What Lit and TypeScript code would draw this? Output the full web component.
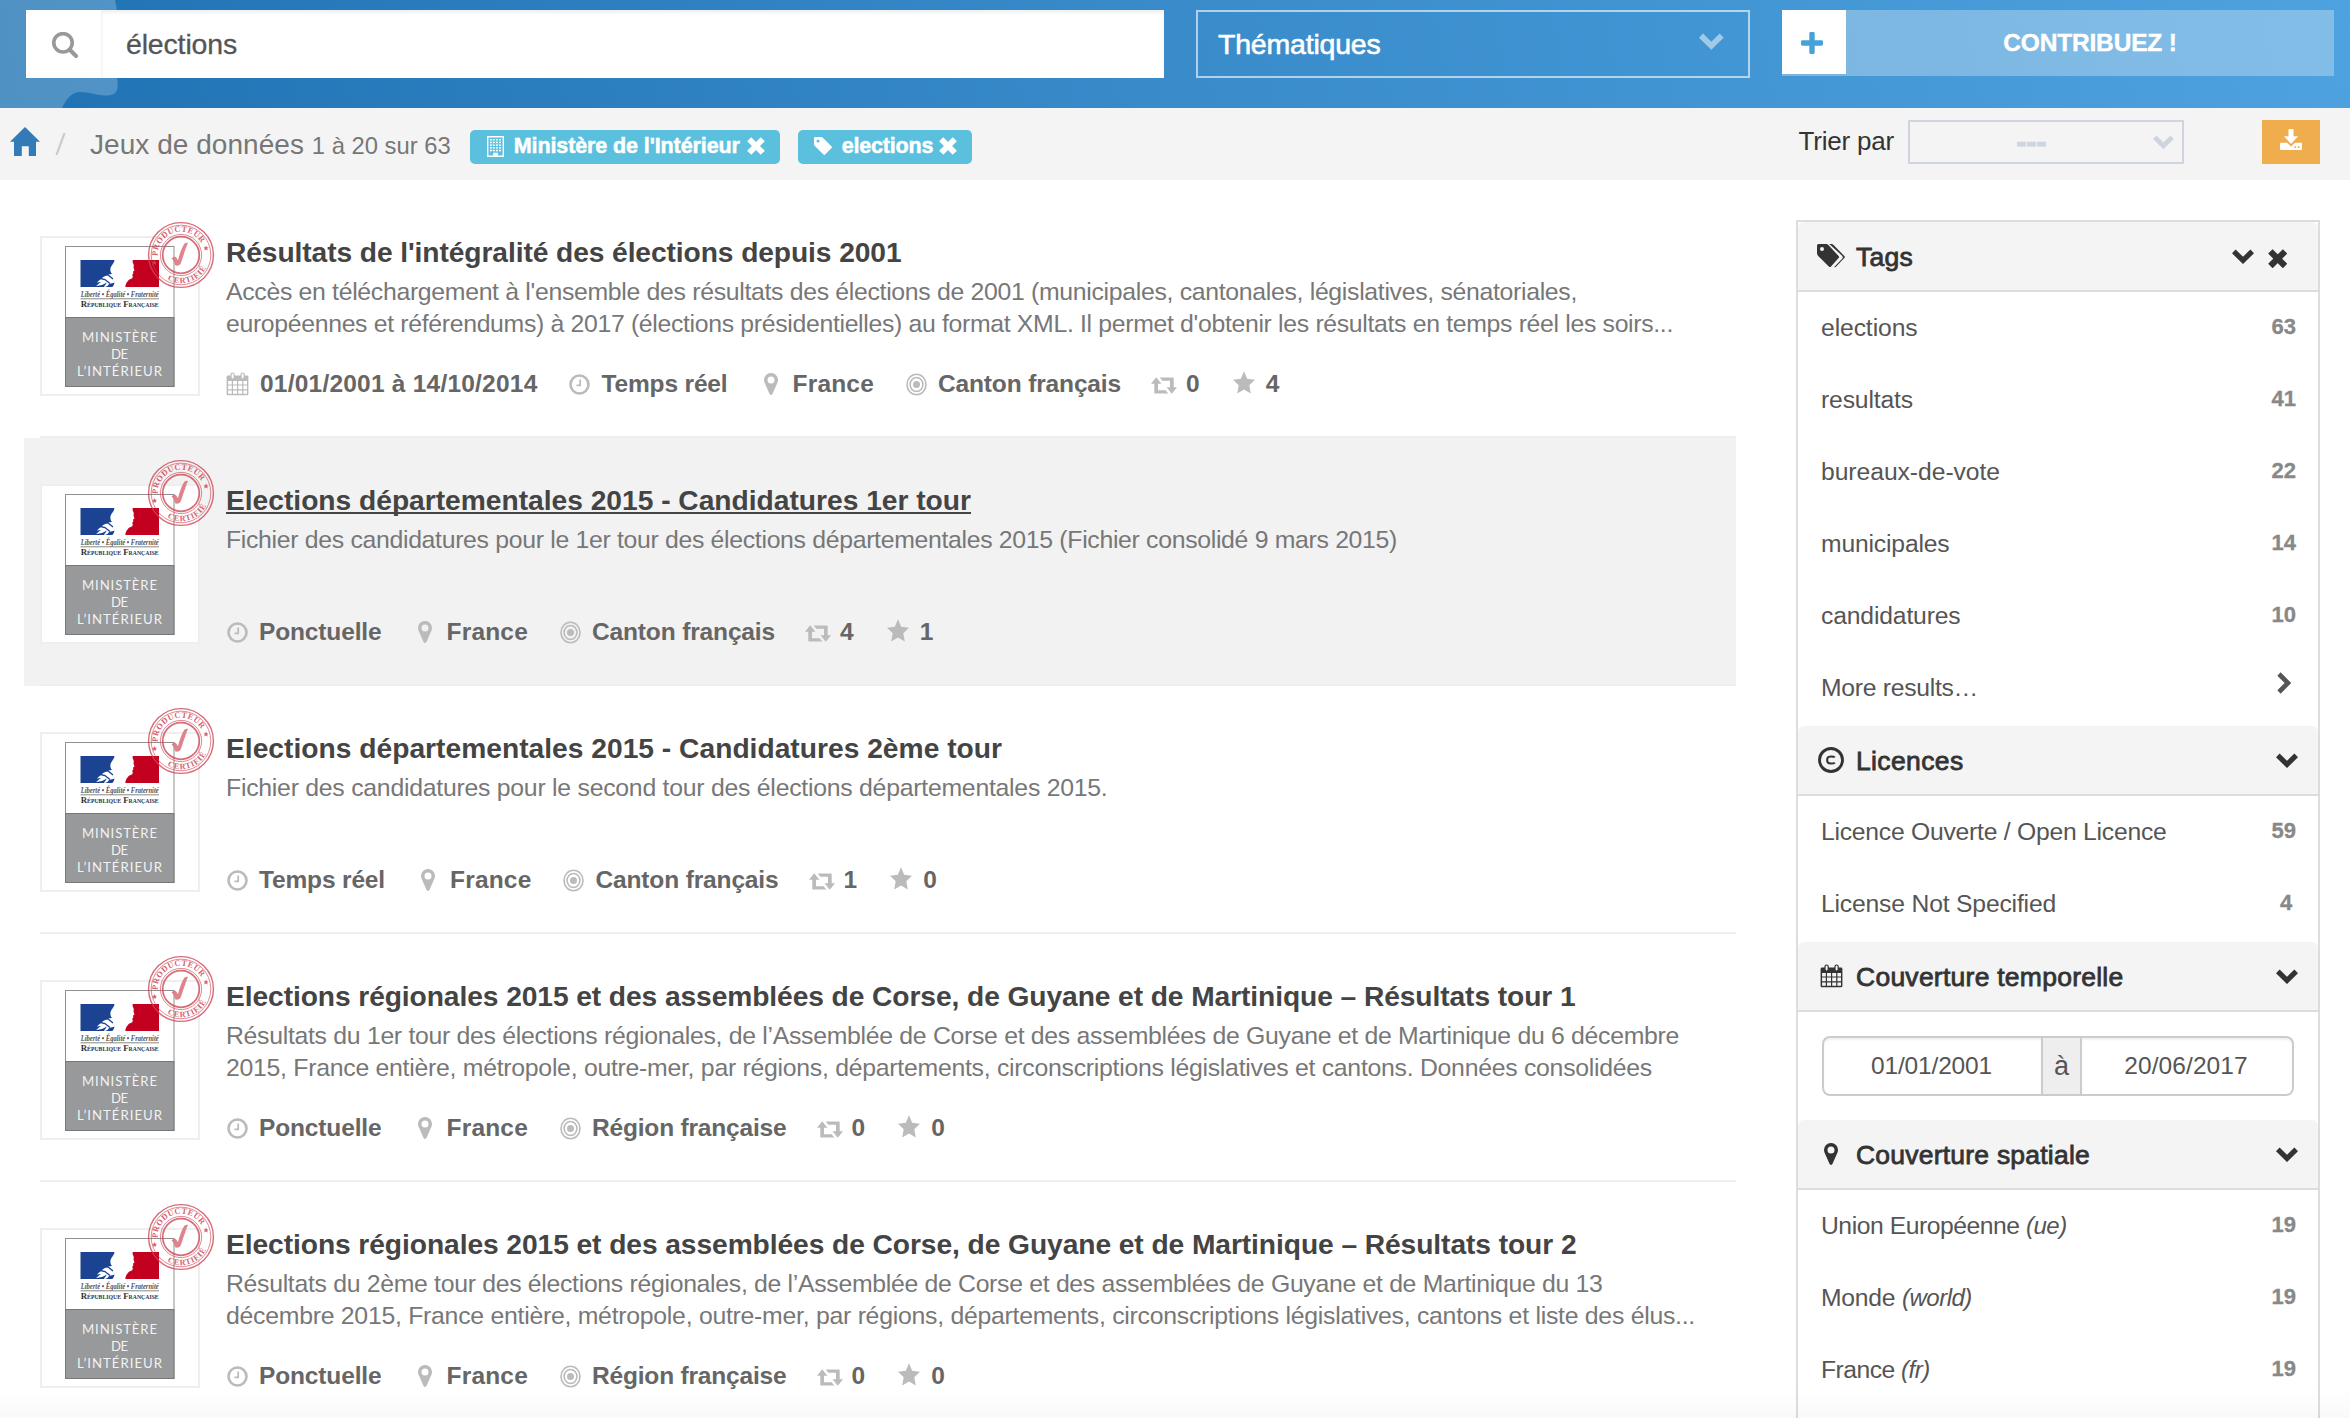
import { LitElement, html, css, svg, nothing } from "lit";
import { customElement, property } from "lit/decorators.js";
import { classMap } from "lit/directives/class-map.js";

/** A single line of text, tracked so that it fills the given width. */
@customElement("text-run")
class TextRun extends LitElement {
  @property() text = "";
  @property({ type: Number }) w = 0;

  render() {
    return html`${this.text}`;
  }

  updated() {
    if (!this.w) return;
    this.style.letterSpacing = "0px";
    const natural = this.getBoundingClientRect().width;
    this.style.letterSpacing = `${(this.w - natural) / this.text.length}px`;
  }
}

const run = (text: string, w = 0) => html`<text-run .text=${text} .w=${w}></text-run>`;

const calendar = svg`
  <path d="M2 3.5h19a1.4 1.4 0 0 1 1.4 1.4v17a1.4 1.4 0 0 1-1.4 1.4H2A1.4 1.4 0 0 1 .6 21.900V4.900A1.4 1.4 0 0 1 2 3.500zM2.100 9v3.400h3.700V9zm4.900 0v3.400h4V9zm5.200 0v3.400h4V9zm5.200 0v3.400h3.600V9zM2.100 13.600v3.600h3.700v-3.600zm4.900 0v3.600h4v-3.600zm5.200 0v3.600h4v-3.600zm5.200 0v3.600h3.600v-3.600zM2.100 18.400v3.400h3.700v-3.400zm4.900 0v3.400h4v-3.400zm5.200 0v3.400h4v-3.400zm5.200 0v3.400h3.600v-3.400z" fill="currentColor" fill-rule="evenodd"/>
  <rect x="5" y="1" width="3.200" height="6" rx="1.600" fill="var(--hole, #fff)" stroke="currentColor" stroke-width="1.200"/>
  <rect x="15" y="1" width="3.200" height="6" rx="1.600" fill="var(--hole, #fff)" stroke="currentColor" stroke-width="1.200"/>`;

const ICONS: Record<string, { w: number; h: number; body: unknown }> = {
  calendar: { w: 23, h: 24, body: calendar },
  clock: {
    w: 21, h: 21,
    body: svg`<circle cx="10.500" cy="10.500" r="9" fill="none" stroke="currentColor" stroke-width="2.600"/><path d="M11.200 5.600v5.800H7.500" fill="none" stroke="currentColor" stroke-width="1.700"/>`,
  },
  pin: {
    w: 14, h: 22,
    body: svg`<path fill="currentColor" fill-rule="evenodd" d="M7 0a6.900 6.900 0 0 1 7 7c0 1.300-.300 2.200-.700 3.100L8.400 20.900a1.550 1.550 0 0 1-2.800 0L.700 10.100A7.300 7.300 0 0 1 0 7a6.900 6.900 0 0 1 7-7zm0 3.500a3.500 3.500 0 1 0 0 7 3.500 3.500 0 0 0 0-7z"/>`,
  },
  target: {
    w: 21, h: 23,
    body: svg`<ellipse cx="10.500" cy="11.500" rx="9.500" ry="10.300" fill="none" stroke="currentColor" stroke-width="1.600"/><ellipse cx="10.500" cy="11.500" rx="6.400" ry="7" fill="none" stroke="currentColor" stroke-width="1.600"/><circle cx="10.500" cy="11.500" r="3.500" fill="currentColor"/>`,
  },
  retweet: {
    w: 26, h: 17,
    body: svg`<path fill="currentColor" d="M5.200.300 10.400 6.800H7v6.500h7.600l2.700 3.300H4.100a.800.800 0 0 1-.800-.800v-9H0zM20.800 16.700 15.600 10.200H19V3.700h-7.600L8.700.400h13.200a.8.8 0 0 1 .8.800v9H26z"/>`,
  },
  star: {
    w: 22, h: 23,
    body: svg`<path fill="currentColor" d="m11 .3 3.200 7.500 7.800.9-5.700 5.500 1.500 8.200L11 18.500l-6.800 3.900 1.500-8.200L0 8.700l7.800-.9z"/>`,
  },
  search: {
    w: 26, h: 26,
    body: svg`<circle cx="11" cy="10.800" r="9.200" fill="none" stroke="currentColor" stroke-width="3.600"/><path d="m18 18 6 6" stroke="currentColor" stroke-width="4" stroke-linecap="round"/>`,
  },
  home: {
    w: 30, h: 29,
    body: svg`<path fill="currentColor" d="M15 0 30 14.700h-4V29h-7.200v-9.700h-7V29H4V14.700H0z"/>`,
  },
  building: {
    w: 17, h: 21,
    body: svg`<path fill="currentColor" fill-rule="evenodd" d="M0 0h17v21H0zm1.400 1.400v18.200h4.800v-2.900h4.600v2.900h4.800V1.400z"/><g fill="currentColor">${[3, 5.700, 8.400, 11.100, 13.800].map((y) =>
      [2.900, 5.800, 8.900, 12].map((x) => svg`<rect x=${x} y=${y} width="2" height="1.500"/>`)
    )}</g>`,
  },
  close: {
    w: 18, h: 18,
    body: svg`<path d="m2.200 2.200 13.600 13.600M15.800 2.200 2.200 15.800" stroke="currentColor" stroke-width="5.800"/>`,
  },
  tag: {
    w: 18, h: 18,
    body: svg`<path fill="currentColor" fill-rule="evenodd" d="M0 1.200A1.200 1.200 0 0 1 1.200 0h5.900c.7 0 1.500.4 2 .9l8.500 8.500c.5.500.5 1.100 0 1.600l-6.500 6.500c-.5.500-1.100.5-1.600 0L.9 9.100A3 3 0 0 1 0 7.100zM4 2.400a1.500 1.500 0 1 0 0 3 1.500 1.500 0 0 0 0-3z"/>`,
  },
  tags: {
    w: 28, h: 24,
    body: svg`<path fill="currentColor" fill-rule="evenodd" d="M0 1.600A1.600 1.600 0 0 1 1.600 0h7.200c1 0 2.100.5 2.800 1.200l10 10.700c.7.700.7 1.500 0 2.200l-7.600 8.500c-.7.700-1.500.7-2.200 0L1.200 11.900A4 4 0 0 1 0 9.100zM5 3a2 2 0 1 0 0 4 2 2 0 0 0 0-4z"/><path d="M12.300 0h1.700c1 0 2.100.5 2.800 1.200l10.500 10.700c.7.700.7 1.500 0 2.200l-8.100 8.500c-.6.600-1.200.9-2 .5l8-8.400c.8-1 .8-2-.1-2.900z" fill="currentColor"/>`,
  },
  down: {
    w: 22, h: 15,
    body: svg`<path d="m1.800 2.400 9.200 9 9.200-9" fill="none" stroke="currentColor" stroke-width="5.200"/>`,
  },
  right: {
    w: 14, h: 22,
    body: svg`<path d="m2 2 9 9-9 9" fill="none" stroke="currentColor" stroke-width="4.600"/>`,
  },
  plus: {
    w: 22, h: 22,
    body: svg`<path fill="currentColor" d="M9.700 0h2.600a1.400 1.400 0 0 1 1.400 1.400v6.900h6.900A1.400 1.400 0 0 1 22 9.700v2.600a1.400 1.400 0 0 1-1.400 1.400h-6.900v6.900a1.400 1.400 0 0 1-1.400 1.400H9.700a1.400 1.400 0 0 1-1.400-1.400v-6.900H1.400A1.400 1.400 0 0 1 0 12.300V9.700a1.400 1.400 0 0 1 1.400-1.400h6.900V1.400A1.400 1.400 0 0 1 9.700 0z"/>`,
  },
  download: {
    w: 22, h: 21,
    body: svg`<path fill="currentColor" d="M8.500 0h5v7.300H18L11 15 4 7.300h4.500z"/><path fill="currentColor" fill-rule="evenodd" d="M1.200 13.700h5.900l3.900 3.900 3.900-3.900h5.900a1.200 1.200 0 0 1 1.200 1.200V20a1 1 0 0 1-1 1H1a1 1 0 0 1-1-1v-5.100a1.200 1.200 0 0 1 1.200-1.200zm13.300 3.500v1.700h1.600v-1.700zm3.300 0v1.700h1.600v-1.700z"/>`,
  },
  copyright: {
    w: 26, h: 26,
    body: svg`<circle cx="13" cy="13" r="11.500" fill="none" stroke="currentColor" stroke-width="2.900"/><path d="M16.800 10.400c-1-1.100-6-1.500-7.100.2-.6 1.400-.6 3.400 0 4.800 1.100 1.700 6.100 1.300 7.100.2" fill="none" stroke="currentColor" stroke-width="2.100"/>`,
  },
};

const icon = (name: string, scale = 1) => {
  const i = ICONS[name];
  return html`<svg width=${i.w * scale} height=${i.h * scale} viewBox="0 0 ${i.w} ${i.h}" aria-hidden="true">${i.body}</svg>`;
};

const ministryLogo = html`<svg class="logo" width="110" height="142" viewBox="0 0 110 142">
  <rect x="0.500" y="0.500" width="108.500" height="140" fill="#fff" stroke="#8f8f8f"/>
  <rect x="0.500" y="71.500" width="108.500" height="69" fill="#98999b" stroke="#77787a"/>
  <rect x="15.500" y="14" width="34" height="27" fill="#1c4391"/>
  <rect x="60" y="14" width="34" height="27" fill="#c3001f"/>
  <path fill="#fff" d="M50 13.500h18c-1 2 0 3.500.800 5.500l-.3 2.500 1 3-1.500 1 .3 2-1 1 .5 2.500c-.5 2-2.500 2-3.500 2.500-2 2-4 4-4 8H47c2-2 2-3.500 3-5l-6 1.500-1.500 2-4 1.500 3.500-5-5 2.500-6 1 5-4-4 .5c4-4 9-8.500 15-8.500-2.500-3-2-6.500.5-9.500 1-1.500 2-3 2.500-5z"/>
  <path fill="none" stroke="#1c4391" stroke-width="1.300" d="m33 32 7 1.500 5 4M37 28.500l6 .5 5 4"/>
  <text x="54.700" y="50.600" font-size="7.200" font-style="italic" font-weight="700" textLength="78" lengthAdjust="spacingAndGlyphs" fill="#555">Liberté • Égalité • Fraternité</text>
  <path d="M15.500 52.800H94" stroke="#888" stroke-width="1"/>
  <text x="54.700" y="61.300" font-size="9.200" font-weight="700" font-variant="small-caps" textLength="78" lengthAdjust="spacingAndGlyphs" fill="#333">République Française</text>
  <g fill="#f2f2f2" class="min">
    <text x="54.500" y="95.500" font-size="13.200" textLength="75">MINISTÈRE</text>
    <text x="54.500" y="113" font-size="13.200" textLength="17">DE</text>
    <text x="54.500" y="130" font-size="13.200" textLength="85">L’INTÉRIEUR</text>
  </g>
</svg>`;

const seal = html`<svg class="seal" width="68" height="68" viewBox="-34 -34 68 68">
  <g fill="none" stroke="#cf4757" opacity=".8">
    <circle r="32.400" stroke-width="1.400"/>
    <circle r="29.800" stroke-width=".8"/>
    <circle r="20.600" stroke-width=".8"/>
    <circle r="18.300" stroke-width="1.700"/>
    <path id="up" stroke="none" d="M-22.400 7A23.500 23.500 0 1 1 23.500 2"/>
    <path id="low" stroke="none" d="M-22.400 17.200A28.300 28.300 0 0 0 27.300 7.300"/>
  </g>
  <g fill="#cf4757" opacity=".85" class="ring">
    <text font-size="8.200" font-weight="700"><textPath href="#up" startOffset="6" textLength="62">PRODUCTEUR</textPath></text>
    <text font-size="8.200" font-weight="700"><textPath href="#low" startOffset="11.500" textLength="45">CERTIFIÉ</textPath></text>
    <path d="m25-9.500.800 1.800 1.800.1-1.400 1.200.5 1.800-1.700-1-1.700 1 .5-1.800-1.400-1.200 1.800-.1zM-26.500 5l.8 1.800 1.800.1-1.400 1.200.5 1.800-1.700-1-1.700 1 .5-1.800-1.400-1.200 1.800-.1z"/>
  </g>
  <path fill="#dc7681" opacity=".9" d="M-9.500 3.500c1.500-1.800 4-2.200 5-.8l1.500 2.600C-1.500-1 1-8 3.500-11.500 5-12.500 6.500-12.500 7-12 4.500-7 2 2.500-.5 9c-1.500 2-4.500 2-5.500 1-.5-2.500-1.500-5-3.500-6.500z"/>
</svg>`;

type Meta = [string, string, number?];
interface Dataset {
  title: [string, number];
  lines: [string, number][];
  meta: Meta[];
  hover?: boolean;
}

const FRANCE: Meta = ["pin", "France", 81.5];
const CANTON: Meta = ["target", "Canton français", 183];
const REGION: Meta = ["target", "Région française", 194.5];
const ONCE: Meta = ["clock", "Ponctuelle", 122.5];
const LIVE: Meta = ["clock", "Temps réel", 126];

const DATASETS: Dataset[] = [
  {
    title: ["Résultats de l'intégralité des élections depuis 2001", 675.5],
    lines: [
      ["Accès en téléchargement à l'ensemble des résultats des élections de 2001 (municipales, cantonales, législatives, sénatoriales,", 1351],
      ["européennes et référendums) à 2017 (élections présidentielles) au format XML. Il permet d'obtenir les résultats en temps réel les soirs...", 1447],
    ],
    meta: [["calendar", "01/01/2001 à 14/10/2014", 277.5], LIVE, FRANCE, CANTON, ["retweet", "0"], ["star", "4"]],
  },
  {
    title: ["Elections départementales 2015 - Candidatures 1er tour", 745],
    lines: [["Fichier des candidatures pour le 1er tour des élections départementales 2015 (Fichier consolidé 9 mars 2015)", 1171]],
    meta: [ONCE, FRANCE, CANTON, ["retweet", "4"], ["star", "1"]],
    hover: true,
  },
  {
    title: ["Elections départementales 2015 - Candidatures 2ème tour", 776],
    lines: [["Fichier des candidatures pour le second tour des élections départementales 2015.", 881.5]],
    meta: [LIVE, FRANCE, CANTON, ["retweet", "1"], ["star", "0"]],
  },
  {
    title: ["Elections régionales 2015 et des assemblées de Corse, de Guyane et de Martinique – Résultats tour 1", 1349.5],
    lines: [
      ["Résultats du 1er tour des élections régionales, de l’Assemblée de Corse et des assemblées de Guyane et de Martinique du 6 décembre", 1453],
      ["2015, France entière, métropole, outre-mer, par régions, départements, circonscriptions législatives et cantons. Données consolidées", 1426],
    ],
    meta: [ONCE, FRANCE, REGION, ["retweet", "0"], ["star", "0"]],
  },
  {
    title: ["Elections régionales 2015 et des assemblées de Corse, de Guyane et de Martinique – Résultats tour 2", 1350.5],
    lines: [
      ["Résultats du 2ème tour des élections régionales, de l’Assemblée de Corse et des assemblées de Guyane et de Martinique du 13", 1376.5],
      ["décembre 2015, France entière, métropole, outre-mer, par régions, départements, circonscriptions législatives, cantons et liste des élus...", 1469],
    ],
    meta: [ONCE, FRANCE, REGION, ["retweet", "0"], ["star", "0"]],
  },
];

@customElement("dataset-card")
class DatasetCard extends LitElement {
  @property({ attribute: false }) data!: Dataset;

  static styles = css`
    :host { display: block; height: 246px; border-top: 2px solid #eee; }
    :host([first]) { border-top-color: transparent; }
    .card { display: flex; gap: 26px; box-sizing: border-box; height: 248px; margin: 0 0 -2px -16px; padding: 46px 0 0 16px; }
    .card.hover { background: #f2f2f2; }
    .card.hover .title { text-decoration: underline; text-decoration-thickness: 2px; text-underline-offset: 2px; text-decoration-skip-ink: none; }
    .thumb { position: relative; flex: none; box-sizing: border-box; width: 160px; height: 160px; border: 2px solid #eee; background: #fff; padding: 8px 0 0 23px; }
    .logo { display: block; }
    .logo text { font-family: "Liberation Serif", serif; text-anchor: middle; }
    .logo .min text { font-family: Lato, "Liberation Sans", sans-serif; }
    .seal { position: absolute; left: 105px; top: -27px; }
    :host([first]) .seal { top: -17px; }
    .ring text { font-family: "Liberation Serif", serif; }
    .body { white-space: nowrap; }
    .title { height: 40px; line-height: 32px; font-size: 28.200px; font-weight: 700; color: #444; }
    .desc { height: 92px; line-height: 32px; font-size: 24.800px; color: #777; }
    .meta { display: flex; align-items: center; gap: 31px; height: 32px; line-height: 32px; font-size: 24.500px; font-weight: 700; color: #666; }
    .item { display: flex; align-items: center; gap: 11px; }
    .item.pin .ico { margin-left: 1px; }
    .item.retweet { gap: 9px; margin-left: -1px; }
    .ico { display: flex; justify-content: center; min-width: 22px; color: #bbb; }
    .item.retweet .ico { padding-top: 2px; }
    .item.star { margin-left: 2px; }
    .item.star .ico { margin-top: -3px; }
  `;

  render() {
    const d = this.data;
    return html`<article class=${classMap({ card: true, hover: !!d.hover })}>
      <div class="thumb">${ministryLogo}${seal}</div>
      <div class="body">
        <div class="title">${run(...d.title)}</div>
        <div class="desc">${d.lines.map(([t, w]) => html`<div>${run(t, w)}</div>`)}</div>
        <div class="meta">
          ${d.meta.map(([i, t, w]) => html`<span class="item ${i}"><span class="ico">${icon(i)}</span><span>${run(t, w ?? 0)}</span></span>`)}
        </div>
      </div>
    </article>`;
  }
}

interface Facet {
  icon: string;
  title: [string, number];
  closable?: boolean;
  rows?: { label: string; w: number; note?: string; count?: string }[];
}

const FACETS: Facet[] = [
  {
    icon: "tags",
    title: ["Tags", 57],
    closable: true,
    rows: [
      { label: "elections", w: 96.5, count: "63" },
      { label: "resultats", w: 92, count: "41" },
      { label: "bureaux-de-vote", w: 179, count: "22" },
      { label: "municipales", w: 128.5, count: "14" },
      { label: "candidatures", w: 139.5, count: "10" },
      { label: "More results…", w: 157 },
    ],
  },
  {
    icon: "copyright",
    title: ["Licences", 107.5],
    rows: [
      { label: "Licence Ouverte / Open Licence", w: 345.5, count: "59" },
      { label: "License Not Specified", w: 235, count: "4" },
    ],
  },
  { icon: "calendar", title: ["Couverture temporelle", 267.5] },
  {
    icon: "pin",
    title: ["Couverture spatiale", 234],
    rows: [
      { label: "Union Européenne ", w: 205, note: "(ue)", count: "19" },
      { label: "Monde ", w: 81, note: "(world)", count: "19" },
      { label: "France ", w: 80, note: "(fr)", count: "19" },
    ],
  },
];

@customElement("facet-panel")
class FacetPanel extends LitElement {
  static styles = css`
    :host { display: block; box-sizing: border-box; border: 2px solid #ddd; border-bottom: 0; }
    .head { display: flex; align-items: center; box-sizing: border-box; height: 70px; padding: 0 20px 0 20px; border-bottom: 2px solid #ddd; border-radius: 6px 6px 0 0; background: #f4f4f4; color: #333; font-size: 26.500px; --hole: #f4f4f4; }
    .ico { display: flex; justify-content: center; width: 28px; margin: 0 11px 0 -1px; }
    .name { flex: 1; -webkit-text-stroke: 0.8px #333; padding-top: 2px; line-height: 34px; }
    .ctl { display: flex; align-items: center; gap: 14px; }
    .ctl.closable { margin-right: 11px; }
    .ctl.closable svg + svg { margin-top: 5px; }
    .rows { padding-bottom: 2px; }
    .row { display: flex; justify-content: space-between; box-sizing: border-box; height: 72px; padding: 20px 22px 0 23px; font-size: 24.700px; line-height: 32px; color: #555; white-space: pre; }
    .row em { font-size: 24px; letter-spacing: -0.5px; }
    .count { min-width: 20px; text-align: center; font-size: 22px; font-weight: 700; line-height: 29px; color: #888; -webkit-text-stroke: 0.3px #888; }
    .more { display: flex; padding: 0 5px 0 0; height: 22px; }
    .range { display: flex; box-sizing: border-box; height: 108px; padding: 24px; }
    .box { display: flex; align-items: center; justify-content: center; box-sizing: border-box; height: 60px; border: 2px solid #ccc; font-size: 24.500px; color: #555; box-shadow: inset 0 2px 2px rgba(0, 0, 0, 0.06); }
    .from { width: 219px; border-radius: 8px 0 0 8px; border-right: 0; padding-right: 2px; }
    .mid { width: 41px; background: #eee; font-size: 27px; box-shadow: none; }
    .to { flex: 1; border-radius: 0 8px 8px 0; border-left: 0; padding-right: 2px; }
  `;

  render() {
    return FACETS.map(
      (f) => html`<section>
        <div class="head">
          <span class="ico">${icon(f.icon)}</span>
          <span class="name">${run(...f.title)}</span>
          <span class=${classMap({ ctl: true, closable: !!f.closable })}>${icon("down")}${f.closable ? icon("close", 1.080) : nothing}</span>
        </div>
        ${f.rows
          ? html`<div class="rows">${f.rows.map(
              (r) => html`<div class="row"><span>${run(r.label, r.w)}${r.note ? html`<em>${r.note}</em>` : nothing}</span>${r.count
                ? html`<span class="count">${r.count}</span>`
                : html`<span class="more">${icon("right")}</span>`}</div>`
            )}</div>`
          : html`<div class="range">
              <div class="box from">${run("01/01/2001", 121)}</div>
              <div class="box mid">à</div>
              <div class="box to">${run("20/06/2017", 123.500)}</div>
            </div>`}
      </section>`
    );
  }
}

@customElement("app-root")
class AppRoot extends LitElement {
  static styles = css`
    :host { display: block; height: 1418px; overflow: hidden; background: #fff; color: #333; font-family: "Liberation Sans", Arial, sans-serif; }
    svg { display: block; }
    .top { position: relative; display: flex; box-sizing: border-box; height: 108px; padding: 10px 16px 0 26px; background: linear-gradient(80deg, #1f73b4 0%, #398bca 50%, #4da2df 100%); }
    .map { position: absolute; left: 0; top: 0; }
    .search { position: relative; display: flex; width: 1138px; height: 68px; background: #fff; }
    .glass { display: flex; align-items: center; justify-content: center; width: 76px; color: #999; padding: 2px 0 0 2px; box-sizing: border-box; }
    .query { flex: 1; padding-left: 24px; line-height: 68px; font-size: 28.500px; color: #555; border-left: 1px solid #f3f3f3; margin-left: -1px; box-shadow: inset 0 3px 3px rgba(0, 0, 0, 0.06); -webkit-text-stroke: 0.3px #555; }
    .themes { display: flex; justify-content: space-between; align-items: flex-start; box-sizing: border-box; width: 554px; height: 68px; margin-left: 32px; padding: 0 24px 0 20px; border: 2px solid rgba(255, 255, 255, 0.6); color: #fff; font-size: 28.500px; line-height: 64px; -webkit-text-stroke: 0.6px #fff; }
    .themes svg { margin: 21px 0 0; opacity: 0.5; }
    .contribute { display: flex; width: 552px; height: 66px; margin-left: 32px; background: rgba(255, 255, 255, 0.3); color: #fff; }
    .plus { display: flex; align-items: center; justify-content: center; box-sizing: border-box; width: 64px; height: 64px; padding: 2px 4px 0 0; background: #fff; color: #45a3d9; }
    .cta { flex: 1; text-align: center; font-size: 24.500px; font-weight: 700; line-height: 66px; -webkit-text-stroke: 0.4px #fff; }
    .bar { display: flex; align-items: center; box-sizing: border-box; height: 72px; padding: 0 30px 0 10px; background: #f4f4f4; white-space: nowrap; }
    .home { color: #337ab7; margin-top: -5px; }
    .slash { margin-left: 15px; font-size: 28px; color: #ccc; }
    .crumb { margin-left: 24px; font-size: 28px; line-height: 32px; color: #777; padding-top: 3px; }
    .crumb small { font-size: 23.800px; }
    .badge { display: flex; align-items: center; box-sizing: border-box; height: 34px; margin-top: 6px; padding: 0 15px 2px 16px; border-radius: 5px; background: #5bc0de; color: #fff; font-size: 21.500px; font-weight: 700; -webkit-text-stroke: 0.5px #fff; }
    .b1 { margin-left: 19px; width: 310px; }
    .b2 { margin-left: 18px; width: 174px; }
    .badge .lbl { flex: 1; margin-left: 10px; padding-top: 1px; }
    .b1 .ico { margin: 0 0 0 1px; }
    .sort { margin-left: auto; font-size: 26px; color: #333; margin-top: -5px; }
    .select { display: flex; align-items: center; box-sizing: border-box; width: 276px; height: 44px; margin: -4px 78px 0 14px; padding-right: 8px; border: 2px solid #cfd5df; color: #cfd5df; }
    .select span { flex: 1; text-align: center; font-size: 30px; font-weight: 700; -webkit-text-stroke: 1.2px #cfd5df; }
    .dl { display: flex; justify-content: center; box-sizing: border-box; width: 58px; height: 44px; margin-top: -4px; padding-top: 9px; background: #f0ad4e; color: #fff; }
    .main { display: flex; padding: 8px 30px 0 40px; gap: 60px; }
    .list { flex: 1; }
    facet-panel { width: 524px; height: 1300px; margin-top: 32px; }
    .fade { position: absolute; left: 0; top: 1388px; width: 2350px; height: 30px; background: linear-gradient(rgba(0, 0, 0, 0), rgba(0, 0, 0, 0.025)); }
  `;

  render() {
    return html`
      <header class="top">
        <svg class="map" width="130" height="108"><path fill="#fff" fill-opacity=".22" d="M0 0h115q2 8 2 14v64q2 9-1 14c-6 8-24 0-37 0-9 1-13 8-17 16H0z"/></svg>
        <div class="search"><span class="glass">${icon("search")}</span><span class="query">${run("élections", 111)}</span></div>
        <div class="themes"><span>${run("Thématiques", 162.500)}</span>${icon("down", 1.120)}</div>
        <div class="contribute"><span class="plus">${icon("plus")}</span><span class="cta">${run("CONTRIBUEZ !", 173.500)}</span></div>
      </header>
      <nav class="bar">
        <span class="home">${icon("home")}</span>
        <span class="slash"><svg width="11" height="22"><path d="M1.500 22 9.500 0" stroke="#ccc" stroke-width="2.200"/></svg></span>
        <span class="crumb">${run("Jeux de données", 214)} <small>${run("1 à 20 sur 63", 139)}</small></span>
        <span class="badge b1"><span class="ico">${icon("building")}</span><span class="lbl">${run("Ministère de l'Intérieur", 226)}</span>${icon("close")}</span>
        <span class="badge b2"><span>${icon("tag")}</span><span class="lbl">${run("elections", 91.500)}</span>${icon("close")}</span>
        <span class="sort">${run("Trier par", 95.500)}</span>
        <span class="select"><span>---</span>${icon("down", 0.950)}</span>
        <span class="dl">${icon("download")}</span>
      </nav>
      <main class="main">
        <div class="list">${DATASETS.map((d, i) => html`<dataset-card .data=${d} ?first=${i === 0}></dataset-card>`)}</div>
        <facet-panel></facet-panel>
      </main>
      <div class="fade"></div>
    `;
  }
}
